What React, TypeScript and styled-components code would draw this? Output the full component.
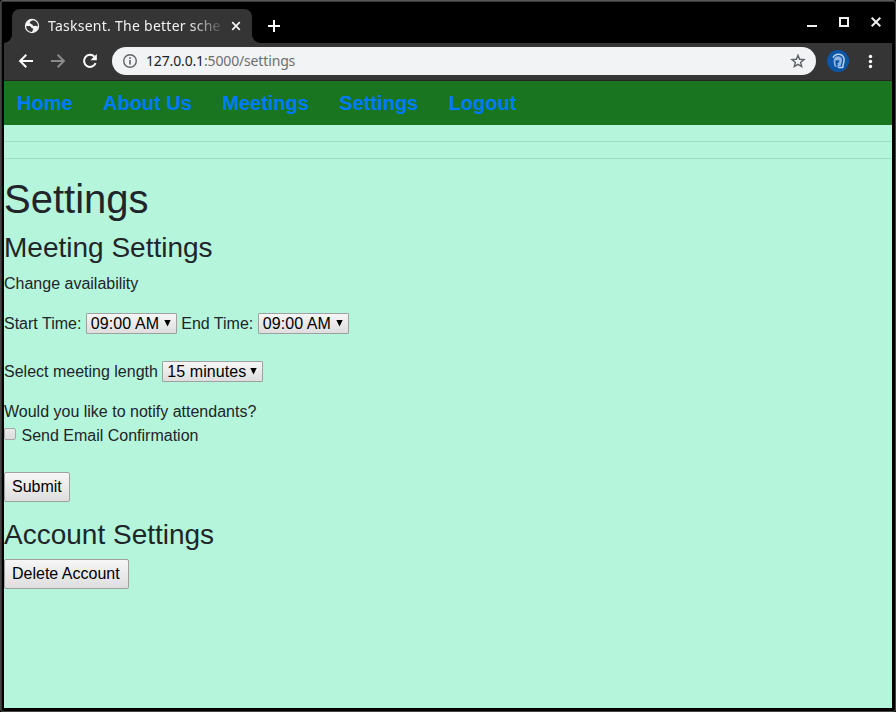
import React from "react";
import styled, { createGlobalStyle } from "styled-components";

const GlobalStyle = createGlobalStyle`
  *, *::before, *::after { box-sizing: border-box; }
  body { margin: 0; background: #000; }
`;

const WindowFrame = styled.div`
  width: 896px;
  height: 712px;
  display: flex;
  flex-direction: column;
  background: #000;
  border: 1px solid #434343;
  border-top-color: #565858;
  border-radius: 3px;
  padding: 1px 3px 3px;
  box-shadow: inset 0 1px 0 #3a3c3c, inset 1px 0 0 #333;
  overflow: hidden;
`;

const TabStrip = styled.div`
  display: flex;
  height: 41px;
  flex: none;
  padding: 7px 8px 0;
`;

const Tab = styled.div`
  position: relative;
  display: flex;
  align-items: center;
  width: 240px;
  height: 34px;
  padding: 0 10px 0 12px;
  border-radius: 8px 8px 0 0;
  background: #353535;

  &::before,
  &::after {
    content: "";
    position: absolute;
    bottom: 0;
    width: 8px;
    height: 8px;
  }
  &::before {
    left: -8px;
    background: radial-gradient(circle at 0 0, transparent 7.5px, #353535 8px);
  }
  &::after {
    right: -8px;
    background: radial-gradient(circle at 100% 0, transparent 7.5px, #353535 8px);
  }
`;

const TabTitle = styled.span`
  width: 174px;
  margin: 0 8px 0 8px;
  white-space: nowrap;
  font: 14px/20px "Noto Sans", sans-serif;
  letter-spacing: 0.26px;
  color: #f1f1f1;
  mask-image: linear-gradient(to right, #000 142px, transparent 178px);
`;

const Glyph = styled.svg<{ $w?: number }>`
  display: block;
  flex: none;
  width: ${(p) => p.$w ?? 16}px;
  height: ${(p) => p.$w ?? 16}px;
`;

const NewTab = styled.div`
  display: flex;
  align-items: center;
  height: 34px;
  margin-left: 14px;
`;

const WindowControls = styled.div`
  display: flex;
  gap: 16px;
  margin-left: auto;
  padding: 5px 0 0;
  height: 22px;
`;

const Toolbar = styled.div`
  display: flex;
  align-items: center;
  flex: none;
  height: 38px;
  padding: 0 14px 1px;
  background: #353535;
  border-bottom: 1px solid #252525;
`;

const NavIcons = styled.div`
  display: flex;
  gap: 16px;
  margin-right: 14px;
`;

const AddressBar = styled.div`
  display: flex;
  align-items: center;
  width: 704px;
  height: 28px;
  padding: 0 10px;
  border-radius: 14px;
  background: #f1f3f4;
`;

const Url = styled.span`
  flex: 1;
  margin-left: 8px;
  font: 14px/20px "Noto Sans", sans-serif;
  letter-spacing: -0.15px;
  color: #6b6e72;
`;

const Host = styled.span`
  color: #202124;
`;

const Avatar = styled.div`
  margin: 0 13px 0 11px;
`;

const Page = styled.div`
  flex: 1;
  background: #b5f5dc;
  color: #212529;
  font: 16px/24px "Liberation Sans", sans-serif;
`;

const SiteNav = styled.nav`
  display: flex;
  align-items: center;
  gap: 30.4px;
  height: 44px;
  padding: 0 13px;
  background: #19751f;
`;

const NavLink = styled.a`
  color: #007bff;
  font-size: 20px;
  font-weight: 700;
  text-decoration: none;
`;

const Rule = styled.hr`
  margin: 16px 0;
  border: 0;
  border-top: 1px solid rgba(0, 0, 0, 0.1);
`;

const Title = styled.h1`
  margin: 0 0 8px;
  font-size: 40px;
  line-height: 48px;
  font-weight: 500;
`;

const SectionTitle = styled.h3`
  margin: 0 0 8px;
  font-size: 28px;
  line-height: 33px;
  font-weight: 500;
`;

const Paragraph = styled.p`
  margin: 0 0 16px;
`;

const FieldRow = styled.div<{ $after: number }>`
  display: flex;
  align-items: center;
  height: 24px;
  margin-bottom: ${(p) => p.$after}px;
  white-space: pre;
`;

const SelectBox = styled.div<{ $width: number }>`
  display: flex;
  align-items: center;
  justify-content: space-between;
  width: ${(p) => p.$width}px;
  height: 21px;
  margin-bottom: 1px;
  padding: 0 5px 0 4px;
  border: 1px solid #a0a0a0;
  border-radius: 1px;
  background: linear-gradient(#f6f6f6, #dedede);
  color: #000;
  line-height: 19px;
`;

const SelectValue = styled.span`
  letter-spacing: 0.08px;
`;

const Checkbox = styled.span`
  width: 12px;
  height: 12px;
  margin: -4px 5.5px 0 0;
  border: 1px solid #a9a9a9;
  border-radius: 2px;
  background: linear-gradient(#e9e9e9, #dcdcdc);
`;

const Button = styled.button<{ $width: number }>`
  display: block;
  width: ${(p) => p.$width}px;
  height: 30px;
  margin: 0 0 16px;
  padding: 0 0 0 7px;
  border: 1px solid #a0a0a0;
  border-radius: 2px;
  background: linear-gradient(#f6f6f6, #dedede);
  color: #000;
  text-align: left;
  font: 16px/24px "Liberation Sans", sans-serif;
`;

const links = ["Home", "About Us", "Meetings", "Settings", "Logout"];

function Select({ value, width }: { value: string; width: number }) {
  return (
    <SelectBox $width={width}>
      <SelectValue>{value}</SelectValue>
      <Glyph $w={7} viewBox="0 0 7 7">
        <path d="M.3 0h6.400L3.500 6.400z" fill="#000" />
      </Glyph>
    </SelectBox>
  );
}

function BrowserChrome() {
  return (
    <>
      <TabStrip>
        <Tab>
          <Glyph viewBox="0 0 16 16">
            <circle cx="8" cy="8" r="7.2" fill="#f4f4f4" />
            <path
              d="M9.600 2.300C7.800 2.500 6 3.300 5.700 4.800c-.1 1.300 1 1.300 2 1.500 1 .3.8 1.400 1.800 1.700 1 .2 1.600-.5 2.500-.2.8.3 1.200.9 1.900.5.2-2.700-1.500-5.200-4.300-6z"
              fill="#353535"
            />
            <path
              d="M2.200 8.200c1.300-.2 3.200-.3 4.300.3.900.5.6 1.500 1.600 1.800 1.300.3 1.500 1 .8 1.700-.6.600-.5 1.300-1 1.900C4.800 13.700 2.300 11.500 2.200 8.200z"
              fill="#353535"
            />
          </Glyph>
          <TabTitle>Tasksent. The better sche</TabTitle>
          <Glyph $w={12} viewBox="0 0 12 12">
            <path d="M2.2 2.2l7.6 7.6M9.8 2.2L2.2 9.8" stroke="#f4f4f4" strokeWidth="1.7" />
          </Glyph>
        </Tab>
        <NewTab>
          <Glyph viewBox="0 0 16 16">
            <path d="M8 2v12M2 8h12" stroke="#fff" strokeWidth="2" />
          </Glyph>
        </NewTab>
        <WindowControls>
          <Glyph viewBox="0 0 16 16">
            <path d="M3 11h10v2H3z" fill="#eee" />
          </Glyph>
          <Glyph viewBox="0 0 16 16">
            <path d="M4 4h8v8H4z" fill="none" stroke="#eee" strokeWidth="2" />
          </Glyph>
          <Glyph viewBox="0 0 16 16">
            <path d="M3.7 3.7l8.6 8.6M12.3 3.7l-8.6 8.6" stroke="#eee" strokeWidth="2" />
          </Glyph>
        </WindowControls>
      </TabStrip>
      <Toolbar>
        <NavIcons>
          <Glyph viewBox="0 0 16 16">
            <path d="M15 8H2.5M8.3 1.8L2.1 8l6.2 6.2" fill="none" stroke="#fff" strokeWidth="2" />
          </Glyph>
          <Glyph viewBox="0 0 16 16">
            <path d="M1 8h12.5M7.7 1.8L13.9 8l-6.2 6.2" fill="none" stroke="#8b8b8b" strokeWidth="2" />
          </Glyph>
          <Glyph viewBox="0 0 16 16">
            <path d="M13.6 10.2A6 6 0 1 1 12.4 3.7" fill="none" stroke="#fff" strokeWidth="2" />
            <path d="M14.8 1v6.3H8.5z" fill="#fff" />
          </Glyph>
        </NavIcons>
        <AddressBar>
          <Glyph viewBox="0 0 16 16">
            <circle cx="8" cy="8" r="6.3" fill="none" stroke="#5f6368" strokeWidth="1.4" />
            <path d="M7.2 7h1.6v4.5H7.2zM7.2 4.3h1.6v1.6H7.2z" fill="#5f6368" />
          </Glyph>
          <Url>
            <Host>127.0.0.1</Host>:5000/settings
          </Url>
          <Glyph viewBox="0 0 16 16">
            <path
              d="M8 2.3l1.6 4 4.4.3-3.4 2.8 1.1 4.2L8 11.3l-3.7 2.3 1.1-4.2L2 6.6l4.4-.3z"
              fill="none"
              stroke="#5f6368"
              strokeWidth="1.4"
            />
          </Glyph>
        </AddressBar>
        <Avatar>
          <Glyph $w={22} viewBox="0 0 22 22">
            <circle cx="11" cy="11" r="11" fill="#0d56a6" />
            <path
              d="M6 7.800C7.200 5.300 9.300 4.200 11.800 4.300c3.600.2 5.600 2.800 5.300 6.100-.2 2.900-1.500 4.700-1.200 6.800-1.800.6-3.700.4-5-.4"
              fill="none"
              stroke="#b9d3ec"
              strokeWidth="1.5"
            />
            <path d="M6.600 11c.1-3 2-4.800 4.600-4.700 2.700.1 4 2 3.800 4.500-.2 2.300-1.200 3.300-1.300 5.200l-5.900.8-.9-2.500z" fill="#8fb7df" />
            <path d="M8.200 10.600l4.300-.4-.6 2.300-1.500.5.6 2.300-2.100.6z" fill="#0d56a6" />
          </Glyph>
        </Avatar>
        <Glyph viewBox="0 0 16 16">
          <g transform="translate(5.500 0)" fill="#fff">
            <circle cx="3" cy="3.500" r="1.700" />
            <circle cx="3" cy="8.500" r="1.700" />
            <circle cx="3" cy="13.500" r="1.700" />
          </g>
        </Glyph>
      </Toolbar>
    </>
  );
}

export default function App() {
  return (
    <>
      <GlobalStyle />
      <WindowFrame>
        <BrowserChrome />
        <Page>
          <SiteNav>
            {links.map((label) => (
              <NavLink key={label}>{label}</NavLink>
            ))}
          </SiteNav>
          <Rule />
          <Rule />
          <Title>Settings</Title>
          <SectionTitle>Meeting Settings</SectionTitle>
          <Paragraph>Change availability</Paragraph>
          <FieldRow $after={24}>
            {"Start Time: "}
            <Select value="09:00 AM" width={91} />
            {" End Time: "}
            <Select value="09:00 AM" width={91} />
          </FieldRow>
          <FieldRow $after={16}>
            {"Select meeting length "}
            <Select value="15 minutes" width={101} />
          </FieldRow>
          <FieldRow $after={0}>Would you like to notify attendants?</FieldRow>
          <FieldRow $after={24}>
            <Checkbox />
            Send Email Confirmation
          </FieldRow>
          <Button $width={66}>Submit</Button>
          <SectionTitle>Account Settings</SectionTitle>
          <Button $width={125}>Delete Account</Button>
        </Page>
      </WindowFrame>
    </>
  );
}
